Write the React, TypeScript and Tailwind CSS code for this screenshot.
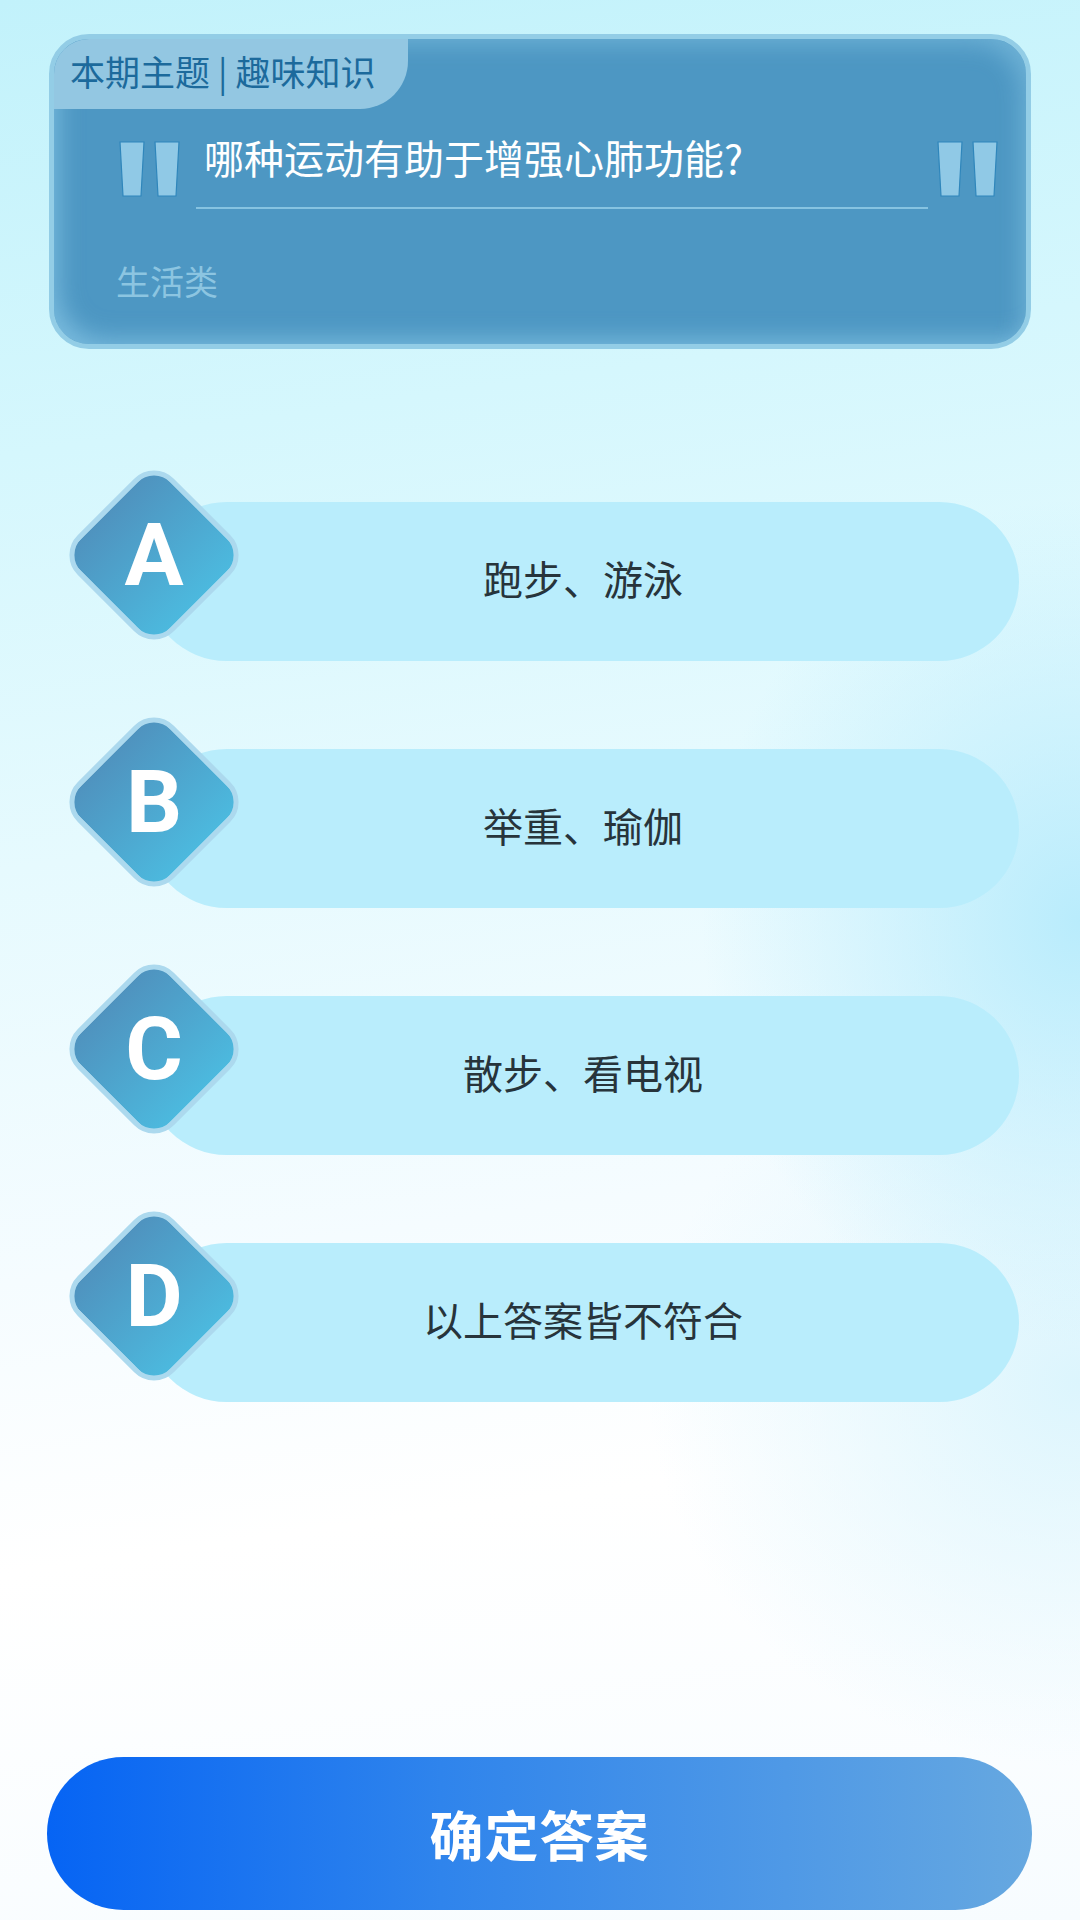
import React from "react";

const options = [
  { key: "A", text: "跑步、游泳" },
  { key: "B", text: "举重、瑜伽" },
  { key: "C", text: "散步、看电视" },
  { key: "D", text: "以上答案皆不符合" },
];

const cjk = { fontFamily: '"Noto Sans CJK SC", "Noto Sans", sans-serif' };

function QuoteMark() {
  return (
    <svg width="62" height="56" viewBox="0 0 62 56" className="shrink-0">
      <polygon points="1,1 25,1 22,55 4,55" fill="#90c9e6" stroke="#2f86bb" strokeWidth="1.2" />
      <polygon points="36,1 60,1 57,55 39,55" fill="#90c9e6" stroke="#2f86bb" strokeWidth="1.2" />
    </svg>
  );
}

function OptionRow({ letter, text }: { letter: string; text: string }) {
  return (
    <div className="relative h-[191px]">
      <div className="ml-[147px] mr-[61px] mt-[32px] flex h-[159px] items-center justify-center rounded-full bg-[#b9edfc] pb-[8px]">
        <span className="text-[40px] leading-none text-[#27343b]" style={cjk}>
          {text}
        </span>
      </div>
      {/* diamond badge */}
      <div className="absolute left-[69px] top-0 flex h-[170px] w-[170px] items-center justify-center">
        <div className="h-[136px] w-[136px] rotate-45 rounded-[28px] border-[5px] border-[#acd9ee] bg-[linear-gradient(90deg,#4f93bf_0%,#4cb9de_100%)]" />
        <span className="absolute text-[88px] font-bold leading-none text-white [font-family:Roboto,'Liberation_Sans',sans-serif]">
          {letter}
        </span>
      </div>
    </div>
  );
}

export default function App() {
  return (
    <div
      className="flex min-h-[1920px] w-[1080px] flex-col bg-[radial-gradient(ellipse_35%_22%_at_100%_48%,#b9ecfc_0%,rgba(185,236,252,0)_100%),radial-gradient(ellipse_40%_20%_at_100%_72%,#dcf5fd_0%,rgba(220,245,253,0)_100%),linear-gradient(172deg,#c2f2fb_0%,#d5f7fd_22%,#e6fafe_42%,#f5fcff_62%,#ffffff_76%,#f7fcff_100%)]"
      style={cjk}
    >
      {/* question card */}
      <div className="relative mx-[49px] mt-[34px] h-[315px] overflow-hidden rounded-[40px] border-[5px] border-[#93cde6] bg-[#4d97c3] shadow-[inset_18px_-18px_24px_-14px_rgba(150,210,238,0.6),inset_-18px_18px_24px_-14px_rgba(150,210,238,0.45)]">
        <div className="flex h-[70px] w-[354px] items-start rounded-br-[48px] bg-[#93c7e2] pl-[16px] pt-[14px]">
          <span className="text-[35px] leading-none text-[#1c6a9c]">
            本期主题<span className="mx-[8px]">|</span>趣味知识
          </span>
        </div>

        <div className="mt-[24px] flex items-start pl-[65px]">
          <div className="mt-[8px]">
            <QuoteMark />
          </div>
          <div className="ml-[15px] w-[732px]">
            <div className="h-[48px] pl-[8px] text-[40px] leading-[48px] text-white">哪种运动有助于增强心肺功能?</div>
            <div className="mt-[26px] h-[2px] bg-[#86c3e1]" />
          </div>
          <div className="ml-[9px] mt-[8px]">
            <QuoteMark />
          </div>
        </div>

        <div className="mt-[52px] pl-[62px] text-[34px] leading-[40px] text-[#8cc5e1]">生活类</div>
      </div>

      {/* options */}
      <div className="mt-[121px] flex flex-col gap-[56px]">
        {options.map((o) => (
          <OptionRow key={o.key} letter={o.key} text={o.text} />
        ))}
      </div>

      {/* confirm */}
      <div className="mt-auto mb-[10px] ml-[47px] mr-[48px] flex h-[153px] items-center justify-center rounded-full bg-[linear-gradient(90deg,#0664f4_0%,#2f84ec_40%,#4f99e6_75%,#66a8e0_100%)]">
        <span className="text-[54px] font-bold leading-none tracking-[1px] text-white">确定答案</span>
      </div>
    </div>
  );
}
